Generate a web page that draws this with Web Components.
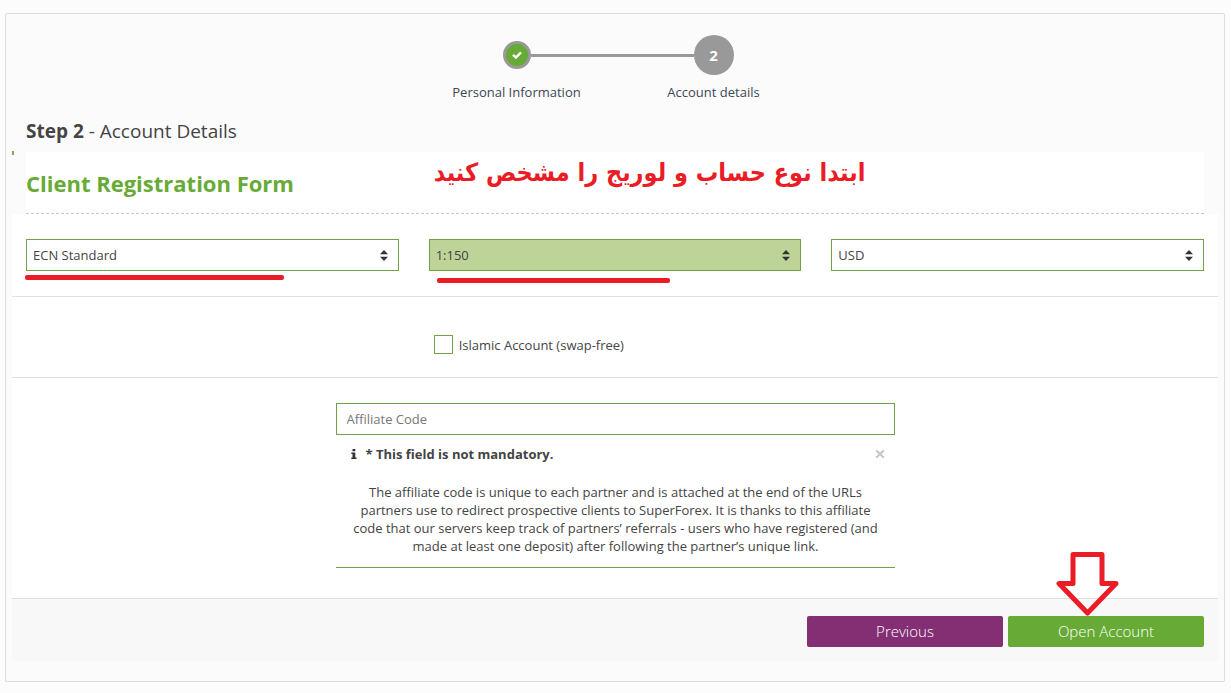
<!DOCTYPE html>
<html lang="en">
<head>
<meta charset="utf-8">
<meta name="viewport" content="width=device-width, initial-scale=1">
<title>Client Registration</title>
<style>
  body {
    margin: 13px 6px 10px 5px;
    background: #fcfcfc;
    color: #444;
    font-family: "Open Sans", "Noto Sans", sans-serif;
    font-size: 13px;
    line-height: 18px;
    --green: #67ab36;
    --field-border: #6fa345;
    --purple: #842f74;
    --grey: #999;
    --line: #e0e0e0;
    --mark: #ea1c26;
  }
</style>
</head>
<body>
<registration-card></registration-card>

<script>
(function () {
  function define(name, html, setup) {
    const template = document.createElement("template");
    template.innerHTML = html;

    customElements.define(name, class extends HTMLElement {
      constructor() {
        super();
        this._shadowRoot = this.attachShadow({ mode: "open" });
        this._shadowRoot.appendChild(template.content.cloneNode(true));
      }

      connectedCallback() {
        if (setup && !this._ready) {
          this._ready = true;
          setup(this, this._shadowRoot);
        }
      }
    });
  }

  // One step: a dot with half a connector on each side, and a caption
  define("wizard-step", `
    <style>
      :host {
        display: block;
        text-align: center;
        color: #3b4856;
      }
      .track {
        display: flex;
        align-items: center;
        height: 40px;
        margin-bottom: 8px;
      }
      .line {
        flex: 1;
        height: 3px;
      }
      :host([done]) .after, :host([current]) .before {
        background: var(--grey);
      }
      .dot {
        display: flex;
        align-items: center;
        justify-content: center;
        box-sizing: border-box;
        width: 40px;
        height: 40px;
        border-radius: 50%;
        background: var(--grey);
        color: #fff;
        font-size: 15px;
        font-weight: 700;
      }
      svg {
        display: none;
      }
      :host([done]) .dot {
        width: 28px;
        height: 28px;
        border: 3px solid var(--grey);
        background: var(--green);
      }
      :host([done]) svg {
        display: block;
      }
    </style>
    <div class="track">
      <span class="line before"></span>
      <span class="dot">
        <svg width="10" height="8" viewBox="0 0 10 8"><path d="M1 3.8 L3.9 6.5 L9 1.4" fill="none" stroke="#fff" stroke-width="2.4"/></svg>
        <slot name="number"></slot>
      </span>
      <span class="line after"></span>
    </div>
    <slot></slot>
  `);

  define("select-field", `
    <style>
      :host {
        display: block;
        position: relative;
      }
      .box {
        display: grid;
        align-items: center;
      }
      select {
        grid-area: 1 / 1;
        appearance: none;
        box-sizing: border-box;
        width: 100%;
        height: 32px;
        margin: 0;
        padding: 0 30px 0 6px;
        border: 1px solid var(--field-border);
        border-radius: 0;
        background: #fff;
        color: #444;
        font: inherit;
      }
      :host([active]) select {
        background: #bed398;
      }
      svg {
        grid-area: 1 / 1;
        justify-self: end;
        margin-right: 11px;
        pointer-events: none;
      }
    </style>
    <div class="box">
      <select></select>
      <svg width="8" height="11" viewBox="0 0 8 11" fill="#333"><path d="M4 0 L8 4.2 H0 Z M0 6.8 H8 L4 11 Z"/></svg>
    </div>
    <slot></slot>
  `, function (host, root) {
    const select = root.querySelector("select");
    select.setAttribute("aria-label", host.getAttribute("label"));
    select.add(new Option(host.getAttribute("value")));
  });

  define("check-field", `
    <style>
      :host {
        display: block;
      }
      label {
        display: flex;
        align-items: center;
        gap: 6px;
      }
      input {
        appearance: none;
        box-sizing: border-box;
        width: 19px;
        height: 19px;
        margin: 0;
        border: 1px solid var(--field-border);
        background: #fff;
      }
      input:checked {
        background: var(--green);
      }
    </style>
    <label><input type="checkbox"><slot></slot></label>
  `);

  define("affiliate-field", `
    <style>
      :host {
        display: block;
        max-width: 559px;
        margin: 0 auto;
      }
      input {
        display: block;
        box-sizing: border-box;
        width: 100%;
        height: 32px;
        margin: 0;
        padding: 0 10px;
        border: 1px solid var(--field-border);
        background: #fff;
        color: #444;
        font: inherit;
      }
      input::placeholder {
        color: #777;
      }
      .info {
        padding: 10px 10px 12px 15px;
        border-bottom: 1px solid var(--field-border);
      }
      .head {
        display: flex;
        align-items: center;
        margin-bottom: 20px;
      }
      .head svg {
        display: block;
      }
      strong {
        flex: 1;
        margin-left: 9px;
      }
      button {
        padding: 0;
        border: 0;
        background: none;
      }
      p {
        margin: 0;
        padding: 0 4px 0 0;
        text-align: center;
      }
    </style>
    <input type="text" placeholder="Affiliate Code" aria-label="Affiliate Code">
    <div class="info">
      <div class="head">
        <svg width="6" height="10" viewBox="0 0 6 10" fill="#333"><path d="M1.5 0 H4.3 V2.2 H1.5 Z M.3 3.4 H4.3 V8.4 H5.6 V10 H.3 V8.4 H1.5 V5 H.3 Z"/></svg>
        <strong><slot name="title"></slot></strong>
        <button type="button" aria-label="Close">
          <svg width="10" height="10" viewBox="0 0 10 10"><path d="M1.2 1.2 L8.8 8.8 M8.8 1.2 L1.2 8.8" stroke="#c6c6c6" stroke-width="2"/></svg>
        </button>
      </div>
      <p><slot></slot></p>
    </div>
  `);

  define("action-button", `
    <style>
      :host {
        display: block;
        position: relative;
        width: 196px;
      }
      button {
        display: block;
        width: 100%;
        height: 31px;
        padding: 0 0 2px;
        border: 0;
        border-radius: 2px;
        background: var(--green);
        color: #fff;
        font: inherit;
        font-size: 15px;
        font-weight: 300;
      }
      :host([secondary]) button {
        background: var(--purple);
      }
    </style>
    <button type="button"><slot></slot></button>
    <slot name="mark"></slot>
  `);

  define("registration-card", `
    <style>
      :host {
        display: block;
        padding: 21px 6px 20px;
        border: 1px solid #dcdcdc;
        border-radius: 2px;
        background: #fbfbfb;
        box-shadow: 0 1px 2px rgba(0, 0, 0, .06);
      }
      .steps {
        display: grid;
        grid-template-columns: 197px 197px;
        justify-content: center;
      }
      h1 {
        margin: 18px 14px 8px;
        font-size: 19px;
        line-height: 24px;
        font-weight: 400;
      }
      .marker {
        width: 2px;
        height: 4px;
        margin-bottom: -3px;
        background: #84a84f;
      }
      header {
        display: grid;
        grid-template-columns: repeat(3, minmax(0, 1fr));
        column-gap: 30px;
        align-items: center;
        height: 61px;
        margin: 0 14px;
        border-bottom: 1px dashed #c8c8c8;
        background: #fff;
      }
      h2 {
        margin: 0;
        color: var(--green);
        font-size: 22px;
        line-height: 30px;
        font-weight: 700;
        white-space: nowrap;
      }
      .note {
        margin: 0 0 20px 5px;
        color: var(--mark);
        font-family: "DejaVu Sans Condensed", "DejaVu Sans", sans-serif;
        font-size: 25px;
        line-height: 30px;
        font-weight: 700;
        white-space: nowrap;
      }
      section {
        padding: 25px 14px;
        border-bottom: 1px solid var(--line);
        background: #fff;
      }
      .row {
        display: grid;
        grid-template-columns: repeat(3, minmax(0, 1fr));
        gap: 30px;
      }
      .options {
        padding-top: 38px;
        padding-bottom: 23px;
      }
      .options check-field {
        grid-column: 2;
        margin-left: 5px;
      }
      .affiliate {
        padding-bottom: 30px;
      }
      footer {
        display: flex;
        justify-content: flex-end;
        gap: 5px;
        padding: 17px 14px 14px;
        background: #f8f8f8;
      }
      .underline {
        position: absolute;
        top: 36px;
        left: -1px;
        width: 259px;
        height: 5px;
        border-radius: 2px;
        background: var(--mark);
      }
      .underline.second {
        top: 39px;
        left: 8px;
        width: 233px;
      }
      .arrow {
        position: absolute;
        left: 48px;
        bottom: 31px;
      }
    </style>
    <div class="steps">
      <wizard-step done>Personal Information</wizard-step>
      <wizard-step current><span slot="number">2</span>Account details</wizard-step>
    </div>
    <h1><b>Step 2</b> - Account Details</h1>
    <div class="marker"></div>
    <header>
      <h2>Client Registration Form</h2>
      <p class="note" lang="fa"><bdi>ابتدا نوع حساب و لوریج را مشخص کنید</bdi></p>
    </header>
    <section class="row">
      <select-field label="Account type" value="ECN Standard"><span class="underline"></span></select-field>
      <select-field label="Leverage" value="1:150" active><span class="underline second"></span></select-field>
      <select-field label="Currency" value="USD"></select-field>
    </section>
    <section class="row options">
      <check-field>Islamic Account (swap-free)</check-field>
    </section>
    <section class="affiliate">
      <affiliate-field>
        <span slot="title">* This field is not mandatory.</span>
        The affiliate code is unique to each partner and is attached at the end of the URLs partners use to redirect prospective clients to SuperForex. It is thanks to this affiliate code that our servers keep track of partners’ referrals - users who have registered (and made at least one deposit) after following the partner’s unique link.
      </affiliate-field>
    </section>
    <footer>
      <action-button secondary>Previous</action-button>
      <action-button>Open Account
        <svg slot="mark" class="arrow" width="63" height="64" viewBox="0 0 63 64"><path d="M17 2.5 H46 V31.5 H60 L31.5 61 L3 31.5 H17 Z" fill="none" stroke="#ea1c26" stroke-width="5" stroke-linejoin="round"/></svg>
      </action-button>
    </footer>
  `);
})();
</script>
</body>
</html>
